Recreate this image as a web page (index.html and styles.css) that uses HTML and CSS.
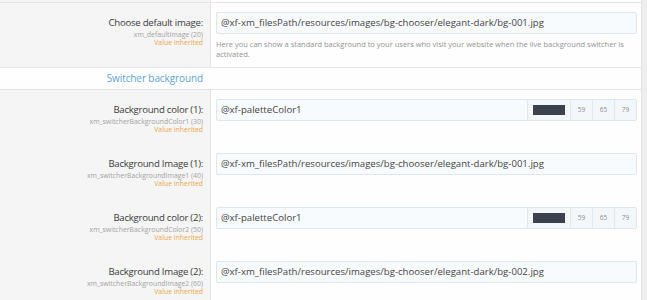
FILE: index.html
```html
<!DOCTYPE html>
<html lang="en">
<head>
    <meta charset="UTF-8">
    <meta name="viewport" content="width=device-width, initial-scale=1.0">
    <title>Style properties: Background switcher</title>
    <link rel="stylesheet" href="styles.css">
</head>
<body>
    <div class="block">
        <!-- tail of the previous row -->
        <div class="form-row form-row--stub">
            <div class="row-term"></div>
            <div class="row-input"></div>
        </div>

        <div class="form-row form-row--first">
            <div class="row-term">
                <div class="row-label">Choose default image:</div>
                <div class="row-hint">xm_defaultImage (20)</div>
                <div class="row-inherited">Value inherited</div>
            </div>
            <div class="row-input">
                <div class="text-input">@xf-xm_filesPath/resources/images/bg-chooser/elegant-dark/bg-001.jpg</div>
                <div class="row-explain">Here you can show a standard background to your users who visit your website when the live background switcher is activated.</div>
            </div>
        </div>

        <div class="block-header">
            <h3 class="block-title">Switcher background</h3>
        </div>

        <div class="form-row">
            <div class="row-term">
                <div class="row-label">Background color (1):</div>
                <div class="row-hint">xm_switcherBackgroundColor1 (30)</div>
                <div class="row-inherited">Value inherited</div>
            </div>
            <div class="row-input">
                <div class="text-input color-input">
                    <span class="color-value">@xf-paletteColor1</span>
                    <span class="color-swatch"><span class="swatch"></span></span>
                    <span class="color-part">59</span>
                    <span class="color-part">65</span>
                    <span class="color-part">79</span>
                </div>
            </div>
        </div>

        <div class="form-row">
            <div class="row-term">
                <div class="row-label">Background Image (1):</div>
                <div class="row-hint">xm_switcherBackgroundImage1 (40)</div>
                <div class="row-inherited">Value inherited</div>
            </div>
            <div class="row-input">
                <div class="text-input">@xf-xm_filesPath/resources/images/bg-chooser/elegant-dark/bg-001.jpg</div>
            </div>
        </div>

        <div class="form-row">
            <div class="row-term">
                <div class="row-label">Background color (2):</div>
                <div class="row-hint">xm_switcherBackgroundColor2 (50)</div>
                <div class="row-inherited">Value inherited</div>
            </div>
            <div class="row-input">
                <div class="text-input color-input">
                    <span class="color-value">@xf-paletteColor1</span>
                    <span class="color-swatch"><span class="swatch"></span></span>
                    <span class="color-part">59</span>
                    <span class="color-part">65</span>
                    <span class="color-part">79</span>
                </div>
            </div>
        </div>

        <div class="form-row">
            <div class="row-term">
                <div class="row-label">Background Image (2):</div>
                <div class="row-hint">xm_switcherBackgroundImage2 (60)</div>
                <div class="row-inherited">Value inherited</div>
            </div>
            <div class="row-input">
                <div class="text-input">@xf-xm_filesPath/resources/images/bg-chooser/elegant-dark/bg-002.jpg</div>
            </div>
        </div>
    </div>
</body>
</html>
```

FILE: styles.css
```css
body {
    margin: 0;
    background-color: #eeeeee;
    font-family: 'Open Sans', 'Noto Sans', sans-serif;
    color: #3a3a3a;
}

.block {
    width: 641px;
    border-right: 1px solid #e2e2e2;
    background-color: #fefefe;
    height: 300px;
    overflow: hidden;
}

/* Rows: term column on the left, input on the right */
.form-row {
    display: grid;
    grid-template-columns: 210px 1fr;
}

.row-term {
    background-color: #f5f5f5;
    text-align: right;
    padding: 12px 7px 10px 6px;
}

.row-input {
    border-left: 1px solid #e4e4e4;
    padding: 9px 4px 10px 5px;
}

.form-row--stub {
    height: 2px;
    border-bottom: 1px solid #e6e6e6;
}

.form-row--stub .row-term,
.form-row--stub .row-input {
    padding: 0;
}

.form-row--first .row-input {
    padding-bottom: 8px;
}

.row-label {
    font-size: 9.6px;
    letter-spacing: -0.25px;
    line-height: 16px;
    color: #3b3b3b;
}

.row-hint {
    font-size: 6.9px;
    line-height: 8px;
    color: #a3a3a3;
}

.row-inherited {
    font-size: 6.9px;
    line-height: 8px;
    color: #eba545;
}

.row-explain {
    margin-top: 5px;
    font-size: 7.5px;
    line-height: 10px;
    color: #939393;
}

/* Section header */
.block-header {
    display: grid;
    grid-template-columns: 210px 1fr;
    height: 21px;
    border-top: 1px solid #e4e4e4;
    border-bottom: 1px solid #e4e4e4;
}

.block-title {
    margin: 0;
    padding-right: 7px;
    text-align: right;
    font-size: 10px;
    font-weight: normal;
    letter-spacing: -0.1px;
    line-height: 21px;
    color: #5ca4d2;
}

/* Inputs */
.text-input {
    box-sizing: border-box;
    height: 22px;
    border: 1px solid #dfe6ee;
    border-radius: 2px;
    background-color: #f8fbfd;
    padding: 0 4px;
    font-size: 9.6px;
    line-height: 20px;
    color: #444;
    white-space: nowrap;
    overflow: hidden;
}

.color-input {
    display: flex;
    padding-right: 0;
}

.color-value {
    flex: 1;
}

.color-swatch {
    display: flex;
    align-items: center;
    justify-content: center;
    width: 42px;
    border-left: 1px solid #e2e8ef;
    background-color: #f4f7fa;
}

.swatch {
    width: 32px;
    height: 10px;
    background-color: #3b414f;
}

.color-part {
    width: 21px;
    border-left: 1px solid #e2e8ef;
    background-color: #f4f7fa;
    text-align: center;
    font-size: 6.5px;
    color: #8d8d8d;
}
```
